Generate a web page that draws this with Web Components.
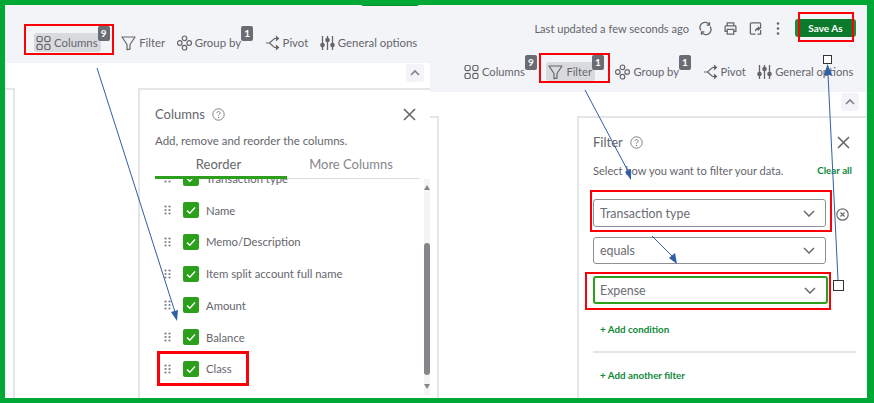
<!DOCTYPE html>
<html>
<head>
<meta charset="utf-8">
<style>
    body { margin: 0; background: #fff; font-family: "Lato", "Liberation Sans", sans-serif; color: #6b6c72; }
</style>
</head>
<body>

<report-frame>
    <report-screen slot="left">
        <tool-bar slot="bar" style="padding: 28px 0 0 29px; --tool-font: 11.4px">
            <tool-item icon="columns" active badge="9">Columns</tool-item>
            <tool-item icon="filter">Filter</tool-item>
            <tool-item icon="group" badge="1">Group by</tool-item>
            <tool-item icon="pivot">Pivot</tool-item>
            <tool-item icon="options">General options</tool-item>
        </tool-bar>
        <columns-panel slot="panel"></columns-panel>
    </report-screen>
    <report-screen slot="right">
        <div slot="bar">
            <top-actions></top-actions>
            <tool-bar style="padding: 25px 0 0 32px; --tool-font: 11.2px">
                <tool-item icon="columns" badge="9">Columns</tool-item>
                <tool-item icon="filter" active badge="1">Filter</tool-item>
                <tool-item icon="group" badge="1">Group by</tool-item>
                <tool-item icon="pivot">Pivot</tool-item>
                <tool-item icon="options">General options</tool-item>
            </tool-bar>
        </div>
        <filter-panel slot="panel"></filter-panel>
    </report-screen>
</report-frame>

<script>
const ICONS = {
    columns: `<rect x="1" y="1.500" width="5.200" height="5.200" rx="1.600"/><rect x="8.800" y="1.500" width="5.200" height="5.200" rx="1.600"/><rect x="1" y="9.300" width="5.200" height="5.200" rx="1.600"/><rect x="8.800" y="9.300" width="5.200" height="5.200" rx="1.600"/>`,
    filter: `<path d="M1 2h13L9 9.500v4.700L6 14.600V9.500z" stroke-linejoin="round"/>`,
    group: `<circle cx="7.500" cy="3.300" r="2.300"/><circle cx="7.500" cy="12.700" r="2.300"/><circle cx="2.800" cy="8" r="2.300"/><circle cx="12.200" cy="8" r="2.300"/>`,
    pivot: `<path d="M1 8h3.500L9.500 3.500h3M4.500 8l5 4.500h3"/><path d="M11.500 1.800l2 1.700-2 1.700zM11.500 10.800l2 1.700-2 1.700z" fill="#666"/>`,
    options: `<path d="M2.500 1v14M7.500 1v14M12.500 1v14" stroke-width="1.300"/><circle cx="2.500" cy="10" r="1.700" fill="#666"/><circle cx="7.500" cy="5" r="1.700" fill="#666"/><circle cx="12.500" cy="10" r="1.700" fill="#666"/>`
}

const toolItemTemplate = document.createElement("template")
toolItemTemplate.innerHTML = `
<style>
    :host {
        display: inline-flex;
        position: relative;
        align-items: center;
        gap: 3px;
        height: 19px;
        padding: 0 3px 0 2px;
        border-radius: 3px;
        font-size: var(--tool-font, 11.4px);
        white-space: nowrap;
        color: #65666c;
    }
    :host([active]) {
        background: #d9dadd;
    }
    :host([badge]) {
        margin-right: 12px;
    }
    svg {
        width: 15px;
        height: 16px;
        fill: none;
        stroke: #666;
        stroke-width: 1.2;
    }
    .badge {
        position: absolute;
        top: -7px;
        right: -9px;
        width: 12px;
        height: 15px;
        border-radius: 2px;
        background: #6b6c72;
        color: #fff;
        font-size: 10px;
        font-weight: 700;
        line-height: 14px;
        text-align: center;
    }
    .badge[hidden] { display: none; }
</style>
<svg viewBox="0 0 15 16"></svg>
<slot></slot>
<span class="badge" hidden></span>
`

class ToolItem extends HTMLElement {
    constructor() {
        super()
        const shadow = this.attachShadow({mode: "open"})
        shadow.append(toolItemTemplate.content.cloneNode(true))
    }

    connectedCallback() {
        this.shadowRoot.querySelector("svg").innerHTML = ICONS[this.getAttribute("icon")]
        const badge = this.shadowRoot.querySelector(".badge")
        if (this.hasAttribute("badge")) {
            badge.textContent = this.getAttribute("badge")
            badge.hidden = false
        }
    }
}
customElements.define("tool-item", ToolItem)

class ToolBar extends HTMLElement {
    constructor() {
        super()
        this.attachShadow({mode: "open"}).innerHTML = `
        <style>
            :host { display: flex; align-items: center; gap: 6.5px; }
        </style>
        <slot></slot>`
    }
}
customElements.define("tool-bar", ToolBar)

class TopActions extends HTMLElement {
    constructor() {
        super()
        this.attachShadow({mode: "open"}).innerHTML = `
        <style>
            :host {
                display: flex;
                align-items: center;
                justify-content: flex-end;
                height: 18px;
                padding: 14px 11px 0 0;
                font-size: 11.1px;
                color: #65666c;
            }
            svg { width: 13px; height: 15px; fill: none; stroke: #666; stroke-width: 1.4; margin-left: 12px; }
            svg.first { margin-left: 10px; }
            svg.kebab { width: 6px; margin-left: 13px; fill: #666; stroke: none; }
            .save {
                margin-left: 14px;
                width: 61px;
                height: 18px;
                box-sizing: border-box;
                padding: 0 3px;
                border-radius: 3px;
                background: #178f3c;
            }
            .save span {
                display: block;
                background: #0c7a2b;
                color: #fff;
                font-size: 10px;
                font-weight: 700;
                line-height: 18px;
                text-align: center;
            }
        </style>
        <span>Last updated a few seconds ago</span>
        <svg class="first" viewBox="0 0 14 15"><path d="M2 9.500A5.400 5.400 0 0 1 11 3.200M12 5.500A5.400 5.400 0 0 1 3 11.800M11.300 .8v3h-3M2.700 14.200v-3h3"/></svg>
        <svg viewBox="0 0 14 15"><path d="M3.500 5V1.500h7V5M3.500 10.500H1.200V5.500q0-.8.8-.8h10q.8 0 .8.8v5h-2.300M3.500 8.500h7v5h-7z"/></svg>
        <svg viewBox="0 0 14 15"><path d="M7 13.500H2.500q-1 0-1-1v-10q0-1 1-1h9q1 0 1 1v5M7 10.500c0-2 1.500-3 4-3M9.500 5.500l2 2-2 2M12.500 9v4.500H9"/></svg>
        <svg class="kebab" viewBox="0 0 6 15"><circle cx="3" cy="2.500" r="1.300"/><circle cx="3" cy="7.500" r="1.300"/><circle cx="3" cy="12.500" r="1.300"/></svg>
        <div class="save"><span>Save As</span></div>`
    }
}
customElements.define("top-actions", TopActions)

class ReportScreen extends HTMLElement {
    constructor() {
        super()
        this.attachShadow({mode: "open"}).innerHTML = `
        <style>
            :host { display: flex; flex-direction: column; min-height: 0; overflow: hidden; position: relative; }
            .bar { background: #f3f4f8; box-sizing: border-box; height: var(--bar-height, 58px); flex: none; }
            .body { flex: 1; display: flex; padding-top: var(--panel-top, 25px); min-height: 0; }
            .sliver {
                flex: none;
                box-sizing: border-box;
                width: var(--sliver-width, 10px);
                margin-right: var(--sliver-gap, 123px);
                border: solid #e4e5e8;
                border-width: 2px 2px 0 0;
            }
            .up {
                position: absolute;
                right: var(--up-right, 6px);
                top: calc(var(--bar-height, 58px) + 1px);
                width: 18px;
                height: 18px;
                border-radius: 3px;
                background: #f3f4f8;
            }
            .up svg { display: block; margin: 5px auto; width: 10px; height: 7px; fill: none; stroke: #80818a; stroke-width: 1.6; }
        </style>
        <div class="bar"><slot name="bar"></slot></div>
        <div class="up"><svg viewBox="0 0 10 7"><path d="M1 6l4-4 4 4"/></svg></div>
        <div class="body"><div class="sliver"></div><slot name="panel"></slot></div>`
    }
}
customElements.define("report-screen", ReportScreen)

const panelStyles = `
    :host {
        display: block;
        box-sizing: border-box;
        border: solid #e4e5e8;
        border-width: 2px 0 0 2px;
        background: #fff;
        flex: 1;
        min-width: 0;
        min-height: 0;
        overflow: hidden;
    }
    .head { display: flex; align-items: center; gap: 7px; font-size: 13px; color: #65666c; }
    .help { width: 13px; height: 13px; }
    .close { margin-left: auto; width: 13px; height: 13px; stroke: #666; stroke-width: 1.6; fill: none; }
    .sub { color: #65666c; white-space: nowrap; }
`
const helpIcon = `<svg class="help" viewBox="0 0 13 13"><circle cx="6.500" cy="6.500" r="5.700" fill="none" stroke="#808188" stroke-width="1"/><path d="M4.900 5.100c0-2.100 3.300-2.100 3.300 0 0 1.200-1.700 1.200-1.700 2.500" fill="none" stroke="#808188"/><circle cx="6.500" cy="9.500" r=".7" fill="#808188"/></svg>`
const closeIcon = `<svg class="close" viewBox="0 0 13 13"><path d="M1 1l11 11M12 1L1 12"/></svg>`

class CheckRow extends HTMLElement {
    constructor() {
        super()
        this.attachShadow({mode: "open"}).innerHTML = `
        <style>
            :host { display: flex; align-items: center; height: 31.8px; flex: none; font-size: 11.3px; color: #65666c; white-space: nowrap; }
            .grip { width: 8px; height: 10px; margin-right: 11px; fill: #7d7e85; }
            .box { width: 16px; height: 16px; margin-right: 7px; border-radius: 2px; background: #2ca01c; }
            .box svg { display: block; width: 16px; height: 16px; fill: none; stroke: #fff; stroke-width: 1.3; }
        </style>
        <svg class="grip" viewBox="0 0 8 10"><circle cx="1.500" cy="1.500" r="1.100"/><circle cx="5.500" cy="1.500" r="1.100"/><circle cx="1.500" cy="5" r="1.100"/><circle cx="5.500" cy="5" r="1.100"/><circle cx="1.500" cy="8.500" r="1.100"/><circle cx="5.500" cy="8.500" r="1.100"/></svg>
        <div class="box"><svg viewBox="0 0 16 16"><path d="M4 8.500l2.800 2.800L12 5.500"/></svg></div>
        <slot></slot>`
    }
}
customElements.define("check-row", CheckRow)

class ColumnsPanel extends HTMLElement {
    constructor() {
        super()
        const rows = ["Transaction type", "Name", "Memo/Description", "Item split account full name", "Amount", "Balance", "Class"]
        this.attachShadow({mode: "open"}).innerHTML = `
        <style>
            ${panelStyles}
            :host { padding: 15px 0 0 15px; }
            .head { padding-right: 14px; height: 18px; }
            .sub { margin-top: 11px; height: 14px; line-height: 14px; font-size: 11.5px; }
            .tabs { display: grid; grid-template-columns: 132px 133px; width: 265px; margin-top: 8px; border-bottom: 1px solid #dcdde0; font-size: 13px; text-align: center; }
            .tab { height: 22px; line-height: 16px; box-sizing: border-box; padding-right: 5px; color: #65666c; }
            .tab.on { border-bottom: 3px solid #2ca01c; margin-bottom: -1px; height: 23px; }
            .tab.off { color: #85868c; }
            .list { position: relative; box-sizing: border-box; width: 275px; display: flex; flex-direction: column; height: 216px; overflow: hidden; padding-left: 9px; }
            .list check-row:first-child { margin-top: -16.7px; }
            .scroll { position: absolute; right: 0; top: 0; bottom: 0; width: 6px; background: #f4f4f5; }
            .thumb { position: absolute; left: 0; right: 0; top: 64px; height: 132px; background: #85868a; border-radius: 3px; }
            .tri { position: absolute; left: 0; width: 0; height: 0; border-left: 3px solid transparent; border-right: 3px solid transparent; }
            .tri.a { top: 6px; border-bottom: 5px solid #85868a; }
            .tri.b { bottom: 6px; border-top: 5px solid #85868a; }
        </style>
        <div class="head">Columns ${helpIcon}${closeIcon}</div>
        <div class="sub">Add, remove and reorder the columns.</div>
        <div class="tabs"><div class="tab on">Reorder</div><div class="tab off">More Columns</div></div>
        <div class="list">
            ${rows.map(r => `<check-row>${r}</check-row>`).join("")}
            <div class="scroll"><div class="tri a"></div><div class="thumb"></div><div class="tri b"></div></div>
        </div>`
    }
}
customElements.define("columns-panel", ColumnsPanel)

class SelectField extends HTMLElement {
    constructor() {
        super()
        this.attachShadow({mode: "open"}).innerHTML = `
        <style>
            :host {
                display: flex;
                align-items: center;
                justify-content: space-between;
                box-sizing: border-box;
                width: 233px;
                height: 28px;
                padding: 0 10px 0 6px;
                border: 1px solid #8d9096;
                border-radius: 3px;
                font-size: 12.4px;
                color: #6b6c72;
            }
            :host([focused]) { width: 235px; border: 2px solid #2ca01c; padding-left: 5px; }
            svg { width: 12px; height: 7px; fill: none; stroke: #6b6c72; stroke-width: 1.5; }
        </style>
        <slot></slot>
        <svg viewBox="0 0 12 7"><path d="M1 1l5 5 5-5"/></svg>`
    }
}
customElements.define("select-field", SelectField)

class FilterPanel extends HTMLElement {
    constructor() {
        super()
        this.attachShadow({mode: "open"}).innerHTML = `
        <style>
            ${panelStyles}
            :host { padding: 15px 17px 0 14px; }
            .head { height: 18px; }
            .subrow { display: flex; justify-content: space-between; align-items: center; margin: 12px -2px 0 0; height: 14px; }
            .sub { font-size: 11.1px; }
            .link { font-size: 9.8px; font-weight: 700; color: #108a3a; white-space: nowrap; }
            .fields { display: flex; flex-direction: column; gap: 10px; margin-top: 22px; position: relative; }
            .clear { position: absolute; left: 243px; top: 9px; width: 13px; height: 13px; fill: none; stroke: #6b6c72; stroke-width: 1.2; }
            .add { margin: 18px 0 0 7px; line-height: 14px; }
            hr { margin: 15px -6px 0 0; height: 2px; border: 0; background: #e4e5e8; }
            .add.last { margin-top: 15px; }
        </style>
        <div class="head">Filter ${helpIcon}${closeIcon}</div>
        <div class="subrow"><span class="sub">Select how you want to filter your data.</span><span class="link">Clear all</span></div>
        <div class="fields">
            <select-field>Transaction type</select-field>
            <select-field style="height: 27px">equals</select-field>
            <select-field focused style="margin-top: 2px">Expense</select-field>
            <svg class="clear" viewBox="0 0 13 13"><circle cx="6.500" cy="6.500" r="5.700"/><path d="M4.500 4.500l4 4M8.500 4.500l-4 4"/></svg>
        </div>
        <div class="add link">+ Add condition</div>
        <hr>
        <div class="add last link">+ Add another filter</div>`
    }
}
customElements.define("filter-panel", FilterPanel)

class ReportFrame extends HTMLElement {
    constructor() {
        super()
        this.attachShadow({mode: "open"}).innerHTML = `
        <style>
            :host {
                display: grid;
                grid-template-columns: 425px 437px;
                position: relative;
                box-sizing: border-box;
                width: 874px;
                height: 403px;
                border: solid #00a935;
                border-width: 5px 7px 5px 5px;
                background: #fff;
                overflow: hidden;
            }
            ::slotted([slot="right"]) { --bar-height: 87px; --panel-top: 24px; --up-right: 8px; --sliver-width: 9px; --sliver-gap: 138px; }
            .notes { position: absolute; left: -5px; top: -5px; width: 874px; height: 403px; pointer-events: none; }
            .tab { position: absolute; left: 355px; top: -5px; width: 60px; height: 6px; background: #00a935; border-radius: 0 0 4px 4px; filter: brightness(.85); }
        </style>
        <slot name="left"></slot>
        <slot name="right"></slot>
        <div class="tab"></div>
        <svg class="notes" viewBox="0 0 874 403">
            <g fill="none" stroke="#fb0007" stroke-width="2">
                <rect x="25" y="25" width="88" height="29"/>
                <rect x="540" y="54" width="69" height="28"/>
                <rect x="799" y="13" width="54" height="28"/>
                <rect x="591" y="191" width="240" height="40"/>
                <rect x="586" y="273" width="244" height="36"/>
                <rect x="158.500" y="352.500" width="89" height="32" stroke-width="3"/>
            </g>
            <g fill="none" stroke="#2f5fa5" stroke-width="1">
                <path d="M97 68 175 312"/>
                <path d="M585 90 629 173"/>
                <path d="M652 236 674 258"/>
                <path d="M828 74 838 280"/>
            </g>
            <g fill="#2f5fa5">
                <path d="M177 321 171 312 178 310z"/>
                <path d="M631 180 625 172 631 169z"/>
                <path d="M677 264 669 258 675 253z"/>
                <path d="M827.500 64 824 75 832 75z"/>
            </g>
            <g fill="#fff" stroke="#333" stroke-width="1">
                <rect x="823.500" y="55.500" width="8" height="8"/>
                <rect x="833.500" y="280.500" width="10" height="10"/>
            </g>
        </svg>`
    }
}
customElements.define("report-frame", ReportFrame)
</script>
</body>
</html>
